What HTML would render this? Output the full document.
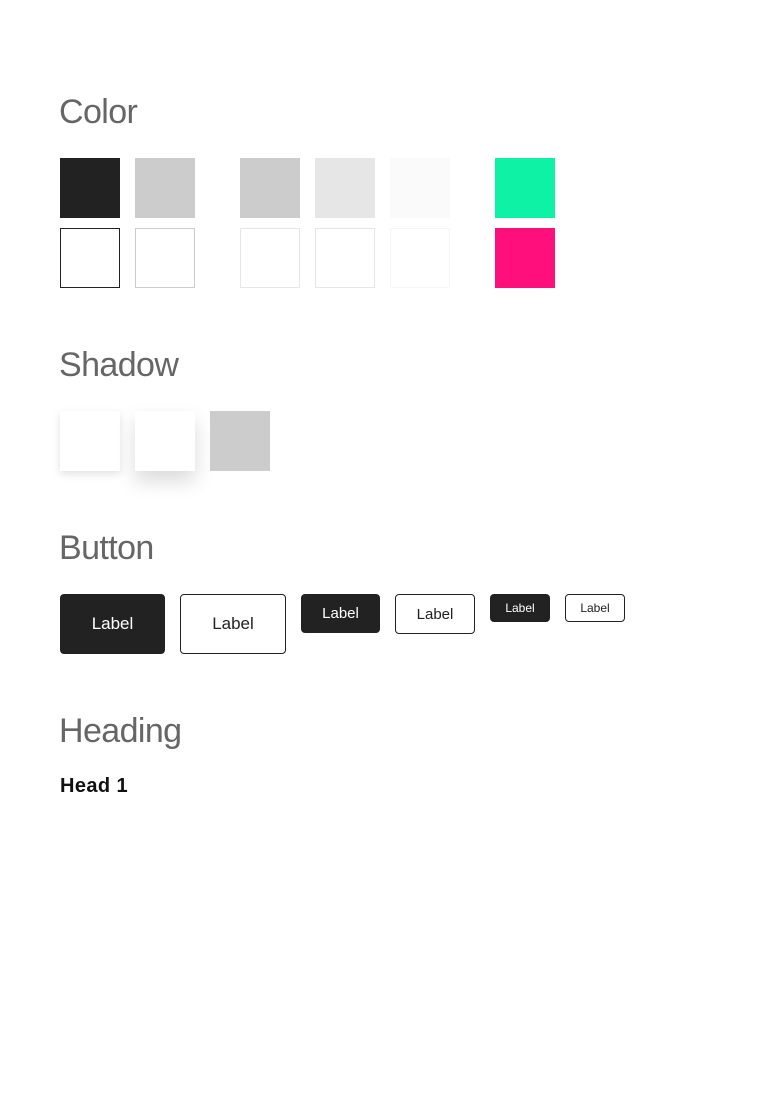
<!DOCTYPE html>
<html><head><meta charset="utf-8"><style>
*{margin:0;padding:0;box-sizing:border-box}
body{width:780px;height:1103px;background:#fff;position:relative;font-family:"Liberation Sans",sans-serif;overflow:hidden}
.h{position:absolute;left:59px;font-size:34px;font-weight:300;color:#666;line-height:1;letter-spacing:-0.6px}
.s{position:absolute;width:60px;height:60px}
.b{position:absolute;display:flex;align-items:center;justify-content:center;border-radius:4px;color:#222;border:1px solid #222}
.d{background:#222;color:#fff}
</style></head><body>
<div class="h" style="top:95px">Color</div>
<div class="s" style="left:60px;top:158px;background:#222"></div>
<div class="s" style="left:135px;top:158px;background:#ccc"></div>
<div class="s" style="left:240px;top:158px;background:#ccc"></div>
<div class="s" style="left:315px;top:158px;background:#e6e6e6"></div>
<div class="s" style="left:390px;top:158px;background:#fafafa"></div>
<div class="s" style="left:495px;top:158px;background:#0ef2a6"></div>
<div class="s" style="left:60px;top:228px;border:1px solid #222"></div>
<div class="s" style="left:135px;top:228px;border:1px solid #ccc"></div>
<div class="s" style="left:240px;top:228px;border:1px solid #e6e6e6"></div>
<div class="s" style="left:315px;top:228px;border:1px solid #e6e6e6"></div>
<div class="s" style="left:390px;top:228px;border:1px solid #f5f5f5"></div>
<div class="s" style="left:495px;top:228px;background:#ff0f7b"></div>
<div class="h" style="top:348px">Shadow</div>
<div class="s" style="left:60px;top:411px;background:#fff;box-shadow:0 3px 8px rgba(0,0,0,.12)"></div>
<div class="s" style="left:135px;top:411px;background:#fff;box-shadow:0 10px 20px rgba(0,0,0,.15)"></div>
<div class="s" style="left:210px;top:411px;background:#ccc"></div>
<div class="h" style="top:531px">Button</div>
<div class="b d" style="left:60px;top:594px;width:105px;height:60px;font-size:17px">Label</div>
<div class="b" style="left:180px;top:594px;width:106px;height:60px;font-size:17px">Label</div>
<div class="b d" style="left:301px;top:594px;width:79px;height:39px;font-size:15px">Label</div>
<div class="b" style="left:395px;top:594px;width:80px;height:40px;font-size:15px">Label</div>
<div class="b d" style="left:490px;top:594px;width:60px;height:28px;font-size:12px">Label</div>
<div class="b" style="left:565px;top:594px;width:60px;height:28px;font-size:12px">Label</div>
<div class="h" style="top:714px">Heading</div>
<div style="position:absolute;left:60px;top:775px;font-size:20px;font-weight:bold;color:#111;letter-spacing:0.4px">Head 1</div>
</body></html>
